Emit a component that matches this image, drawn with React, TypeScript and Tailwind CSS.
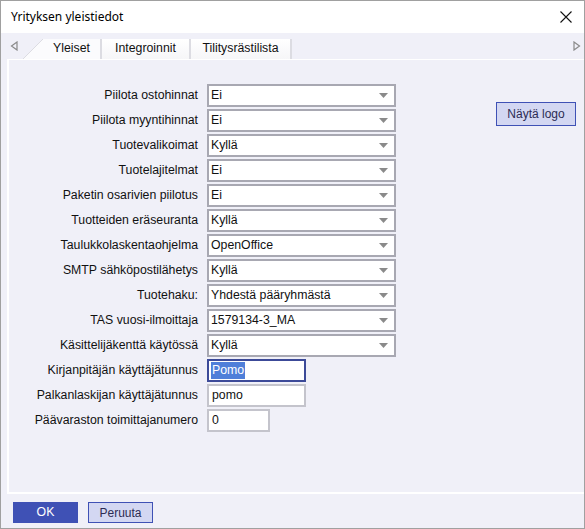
import React from "react";

const SELECTS: { label: string; value: string }[] = [
  { label: "Piilota ostohinnat", value: "Ei" },
  { label: "Piilota myyntihinnat", value: "Ei" },
  { label: "Tuotevalikoimat", value: "Kyllä" },
  { label: "Tuotelajitelmat", value: "Ei" },
  { label: "Paketin osarivien piilotus", value: "Ei" },
  { label: "Tuotteiden eräseuranta", value: "Kyllä" },
  { label: "Taulukkolaskentaohjelma", value: "OpenOffice" },
  { label: "SMTP sähköpostilähetys", value: "Kyllä" },
  { label: "Tuotehaku:", value: "Yhdestä pääryhmästä" },
  { label: "TAS vuosi-ilmoittaja", value: "1579134-3_MA" },
  { label: "Käsittelijäkenttä käytössä", value: "Kyllä" },
];

function Select({ value }: { value: string }) {
  return (
    <div className="w-[189px] h-[23px] bg-white border-2 border-[#a8a8b2] flex items-center justify-between pl-[2px] pr-[6px]">
      <span>{value}</span>
      <svg width="9" height="5" viewBox="0 0 9 5">
        <path d="M0 0H9L4.5 5Z" fill="#8a8a8a" />
      </svg>
    </div>
  );
}

export default function App() {
  return (
    <div className="w-[585px] h-[529px] flex flex-col bg-[#f0f0f8] border border-[#a0a0a0] text-[12.3px] text-[#111] font-['Liberation_Sans',Arial,sans-serif]">
      {/* title bar */}
      <div className="h-[32px] bg-white flex items-center justify-between pl-[10px] pr-[12px] shrink-0">
        <span className="font-['Noto_Sans',sans-serif] text-[12px] text-black">Yrityksen yleistiedot</span>
        <svg width="12" height="12" viewBox="0 0 12 12">
          <path d="M0.5 0.5L11.5 11.5M11.5 0.5L0.5 11.5" stroke="#111" strokeWidth="1.1" />
        </svg>
      </div>

      {/* tab strip */}
      <div className="h-[26px] shrink-0 flex items-end justify-between pl-[9px] pr-[3px]">
        <div className="flex items-end h-full">
          <svg width="8" height="10" viewBox="0 0 8 10" className="mb-[8px]">
            <path d="M7 1V9L1.5 5Z" fill="none" stroke="#8a8a8a" strokeWidth="1.2" />
          </svg>
          <div className="flex items-end ml-[5px] h-[20px]">
            <svg width="20" height="20" viewBox="0 0 20 20" className="block">
              <path d="M0 20L20 0V20Z" fill="#fbfbfd" />
              <path d="M0 20L20 0" stroke="#dcdce2" strokeWidth="1" />
            </svg>
            <div className="h-[20px] w-[59px] bg-[#fbfbfd] border-r-2 border-[#dcdce2] flex items-center pl-[10px] pb-[1px]">Yleiset</div>
            <div className="h-[20px] w-[89px] bg-gradient-to-b from-white to-[#f6f6f8] border-r-2 border-[#dcdce2] flex items-center justify-center pb-[1px]">Integroinnit</div>
            <div className="h-[20px] w-[101px] bg-gradient-to-b from-white to-[#f6f6f8] border-r-2 border-[#dcdce2] flex items-center justify-center pb-[1px]">Tilitysrästilista</div>
          </div>
        </div>
        <svg width="8" height="10" viewBox="0 0 8 10" className="mb-[8px]">
          <path d="M1 1V9L6.5 5Z" fill="none" stroke="#8a8a8a" strokeWidth="1.2" />
        </svg>
      </div>

      {/* panel */}
      <div className="flex-1 ml-[6px] border-t border-l-2 border-b-2 border-white flex justify-between pt-[24px] pr-[8px]">
        <div className="grid grid-cols-[189px_auto] gap-x-[9px] gap-y-[2px] items-center content-start">
          {SELECTS.map((s) => (
            <React.Fragment key={s.label}>
              <div className="text-right whitespace-nowrap">{s.label}</div>
              <Select value={s.value} />
            </React.Fragment>
          ))}
          <div className="text-right whitespace-nowrap">Kirjanpitäjän käyttäjätunnus</div>
          <div className="w-[99px] h-[23px] bg-white border-2 border-[#3c4a98] flex items-center pl-[2px]">
            <span className="bg-[#4f7fd9] text-white px-[1px] leading-[17px]">Pomo</span>
          </div>
          <div className="text-right whitespace-nowrap">Palkanlaskijan käyttäjätunnus</div>
          <div className="w-[99px] h-[23px] bg-white border-2 border-[#c4c4cc] flex items-center pl-[3px]">pomo</div>
          <div className="text-right whitespace-nowrap">Päävaraston toimittajanumero</div>
          <div className="w-[63px] h-[23px] bg-white border-2 border-[#c4c4cc] flex items-center pl-[3px]">0</div>
        </div>
        <div className="pt-[18px]">
          <div className="w-[80px] h-[24px] bg-[#d3d7f2] border border-[#3f51b5] flex items-center justify-center text-[12px] text-[#2c2c54]">Näytä logo</div>
        </div>
      </div>

      {/* bottom buttons */}
      <div className="h-[34px] shrink-0 flex items-start gap-[10px] pt-[8px] pl-[12px]">
        <div className="w-[65px] h-[21px] bg-[#3f51b5] text-white flex items-center justify-center">OK</div>
        <div className="w-[65px] h-[21px] bg-[#d3d7f2] border border-[#3f51b5] text-[12px] text-[#2c2c54] flex items-center justify-center">Peruuta</div>
      </div>
    </div>
  );
}
